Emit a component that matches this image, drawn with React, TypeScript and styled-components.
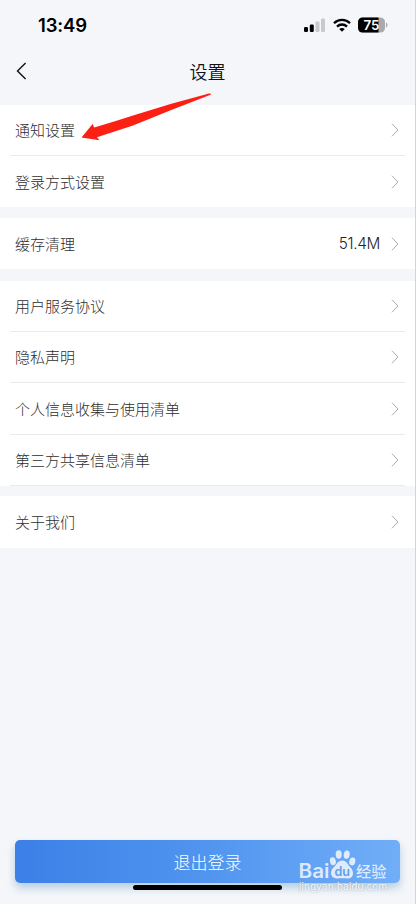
import React from "react";
import styled, { createGlobalStyle } from "styled-components";

const GlobalStyle = createGlobalStyle`
  * { box-sizing: border-box; }
  body { margin: 0; background: #f5f6f9; }
`;

const Screen = styled.div`
  position: relative;
  display: flex;
  flex-direction: column;
  width: 416px;
  height: 904px;
  overflow: hidden;
  background: #f5f6f9;
  border-right: 1px solid #d3d4d6;
  font-family: "Noto Sans CJK SC", sans-serif;
  color: #2e2e2e;
`;

const StatusBar = styled.header`
  display: flex;
  justify-content: space-between;
  align-items: center;
  height: 50px;
  padding: 0 27px 0 38px;
`;

const Clock = styled.time`
  font: 600 18.5px/24px Inter, sans-serif;
  letter-spacing: -0.15px;
  color: #000;
`;

const StatusIcons = styled.div`
  display: flex;
  align-items: center;
  gap: 7.5px;
`;

const NavBar = styled.nav`
  display: grid;
  grid-template-columns: 60px 1fr 60px;
  align-items: center;
  height: 42px;
  margin-bottom: 13px;
`;

const BackButton = styled.button`
  display: flex;
  padding: 0 0 0 16px;
  border: 0;
  background: none;
`;

const Title = styled.h1`
  margin: 0;
  text-align: center;
  font-size: 18px;
  font-weight: 350;
  line-height: 26px;
  color: #111;
`;

const Groups = styled.main`
  display: flex;
  flex-direction: column;
  flex: 1;
`;

const Group = styled.section<{ $gap: number }>`
  background: #fff;
  margin-bottom: ${(p) => p.$gap}px;
`;

const Row = styled.div<{ $line?: boolean; $height: number }>`
  display: flex;
  align-items: center;
  height: ${(p) => p.$height}px;
  margin: 0 10px;
  padding: 0 6px 0 5px;
  border-bottom: ${(p) => (p.$line ? "1px solid #ebebec" : "0")};
`;

const Label = styled.span`
  flex: 1;
  font-size: 15px;
  font-weight: 300;
  line-height: 22px;
`;

const Value = styled.span`
  margin-right: 11px;
  font: 300 15.3px/22px Inter, sans-serif;
  letter-spacing: -0.3px;
  color: #222;
`;

const Footer = styled.footer`
  height: 64px;
  padding: 0 15px;
`;

const LogoutButton = styled.button`
  display: block;
  width: 385px;
  height: 43px;
  padding: 0;
  border: 0;
  border-radius: 5px;
  background: linear-gradient(90deg, #3c80e8, #5195ef 50%, #71aef8);
  box-shadow: 0 5px 9px rgba(80, 140, 190, 0.38);
  color: #fff;
  font-family: inherit;
  font-size: 17px;
  font-weight: 300;
  line-height: 43px;
`;

const HomeIndicator = styled.div`
  position: absolute;
  left: 133px;
  top: 885px;
  width: 149px;
  height: 5px;
  border-radius: 3px;
  background: #000;
`;

const Watermark = styled.div`
  position: absolute;
  left: 298px;
  top: 848px;
`;

const SiteAddress = styled.text`
  font: 400 10.5px "Liberation Sans", sans-serif;
  text-shadow: 0 0 1.5px rgba(110, 130, 150, 0.75);
`;

const Pointer = styled.svg`
  position: absolute;
  left: 80px;
  top: 92px;
`;

const Chevron = () => (
  <svg width="8" height="14" viewBox="0 0 8 14" fill="none">
    <path d="M1 0.7l5.9 6.3L1 13.3" stroke="#acacac" strokeWidth="1" />
  </svg>
);

const Signal = () => (
  <svg width="21" height="14" viewBox="0 0 21 14">
    <rect x="0" y="9" width="4" height="5" rx="1.2" />
    <rect x="5.8" y="6.5" width="4" height="7.5" rx="1.2" />
    <rect x="11.5" y="3.5" width="4" height="10.5" rx="1.2" fill="#c8c9cb" />
    <rect x="17" y="0.5" width="4" height="13.5" rx="1.2" fill="#c8c9cb" />
  </svg>
);

const Wifi = () => (
  <svg width="18" height="14" viewBox="0 0 18 14" fill="none" stroke="#000" strokeWidth="2.3">
    <path d="M1 5.3C5.4 0.8 12.6 0.8 17 5.3" />
    <path d="M4 8.6C6.8 5.8 11.2 5.8 14 8.6" />
    <path d="M9 13.7L6.2 11c1.5-1.5 4.1-1.5 5.6 0z" fill="#000" stroke="none" />
  </svg>
);

const Battery = () => (
  <svg width="30" height="16" viewBox="0 0 30 16">
    <defs>
      <clipPath id="cell"><rect x="0" y="0.5" width="27" height="15" rx="4.6" /></clipPath>
    </defs>
    <g clipPath="url(#cell)">
      <rect width="27" height="16" fill="#aaaaac" />
      <rect width="20.5" height="16" fill="#000" />
    </g>
    <path d="M28 5.5c2 .8 2 4.2 0 5z" fill="#aaaaac" />
    <text x="13.3" y="12.8" textAnchor="middle" fill="#fff" fontFamily="Inter, sans-serif" fontSize="13.4" fontWeight="600" letterSpacing="-0.3">75</text>
  </svg>
);

const BaiduMark = () => (
  <svg width="94" height="48" viewBox="0 0 94 48" fill="#fff" fillOpacity="0.78">
    <text x="0.5" y="29.8" fontFamily="Inter, sans-serif" fontSize="19.8" fontWeight="600" textLength="31" lengthAdjust="spacingAndGlyphs">Bai</text>
    <ellipse cx="34.9" cy="13.2" rx="2.9" ry="4" transform="rotate(-14 34.9 13.2)" />
    <ellipse cx="40.7" cy="6.5" rx="3" ry="4.2" />
    <ellipse cx="48.7" cy="6.7" rx="3" ry="4.2" transform="rotate(8 48.7 6.7)" />
    <ellipse cx="54.3" cy="13.4" rx="3" ry="4" transform="rotate(14 54.3 13.4)" />
    <path d="M44.5 12.6c4.2 0 5.2 4.3 7.8 6.6 4 3.6 3.9 11.3-2.6 11.3-3 0-7-.4-10.3 0-6.8.6-8.3-7.2-3.9-10.9 3-2.5 4.2-7 9-7z" />
    <text x="44.2" y="28" textAnchor="middle" fill="#5f9fee" fillOpacity="1" fontFamily="Inter, sans-serif" fontSize="12.5" fontWeight="600">du</text>
    <text x="58" y="29.2" fontFamily="Noto Sans CJK SC, sans-serif" fontSize="15.2" fontWeight="500">经验</text>
    <SiteAddress x="1" y="42" fillOpacity="0.95" textLength="88">jingyan.baidu.com</SiteAddress>
  </svg>
);

type Item = { label: string; value?: string; line?: boolean; height: number };

const groups: { gap: number; items: Item[] }[] = [
  { gap: 11, items: [{ label: "通知设置", line: true, height: 51 }, { label: "登录方式设置", height: 51 }] },
  { gap: 12, items: [{ label: "缓存清理", value: "51.4M", height: 51 }] },
  {
    gap: 10,
    items: [
      { label: "用户服务协议", line: true, height: 51 },
      { label: "隐私声明", line: true, height: 51 },
      { label: "个人信息收集与使用清单", line: true, height: 52 },
      { label: "第三方共享信息清单", line: true, height: 51 },
    ],
  },
  { gap: 0, items: [{ label: "关于我们", height: 52 }] },
];

export default function App() {
  return (
    <>
      <GlobalStyle />
      <Screen>
        <StatusBar>
          <Clock>13:49</Clock>
          <StatusIcons>
            <Signal />
            <Wifi />
            <Battery />
          </StatusIcons>
        </StatusBar>
        <NavBar>
          <BackButton aria-label="返回">
            <svg width="11" height="18" viewBox="0 0 11 18" fill="none">
              <path d="M9.6 1L1.5 9l8.1 8" stroke="#111" strokeWidth="1.4" />
            </svg>
          </BackButton>
          <Title>设置</Title>
        </NavBar>
        <Groups>
          {groups.map((group) => (
            <Group key={group.items[0].label} $gap={group.gap}>
              {group.items.map((item) => (
                <Row key={item.label} $line={item.line} $height={item.height}>
                  <Label>{item.label}</Label>
                  {item.value && <Value>{item.value}</Value>}
                  <Chevron />
                </Row>
              ))}
            </Group>
          ))}
        </Groups>
        <Footer>
          <LogoutButton>退出登录</LogoutButton>
        </Footer>
        <HomeIndicator />
        <Watermark>
          <BaiduMark />
        </Watermark>
        <Pointer width="132" height="50" viewBox="0 0 132 50">
          <path d="M1.5 45.5L12.6 32L14.2 35.4Q30 31 53 23.5Q90 11.5 129 1.5Q132 1.3 130.5 2.8Q92 17.5 53 33.5L17 45.2L19.5 48.2z" fill="#fb2013" />
        </Pointer>
      </Screen>
    </>
  );
}
